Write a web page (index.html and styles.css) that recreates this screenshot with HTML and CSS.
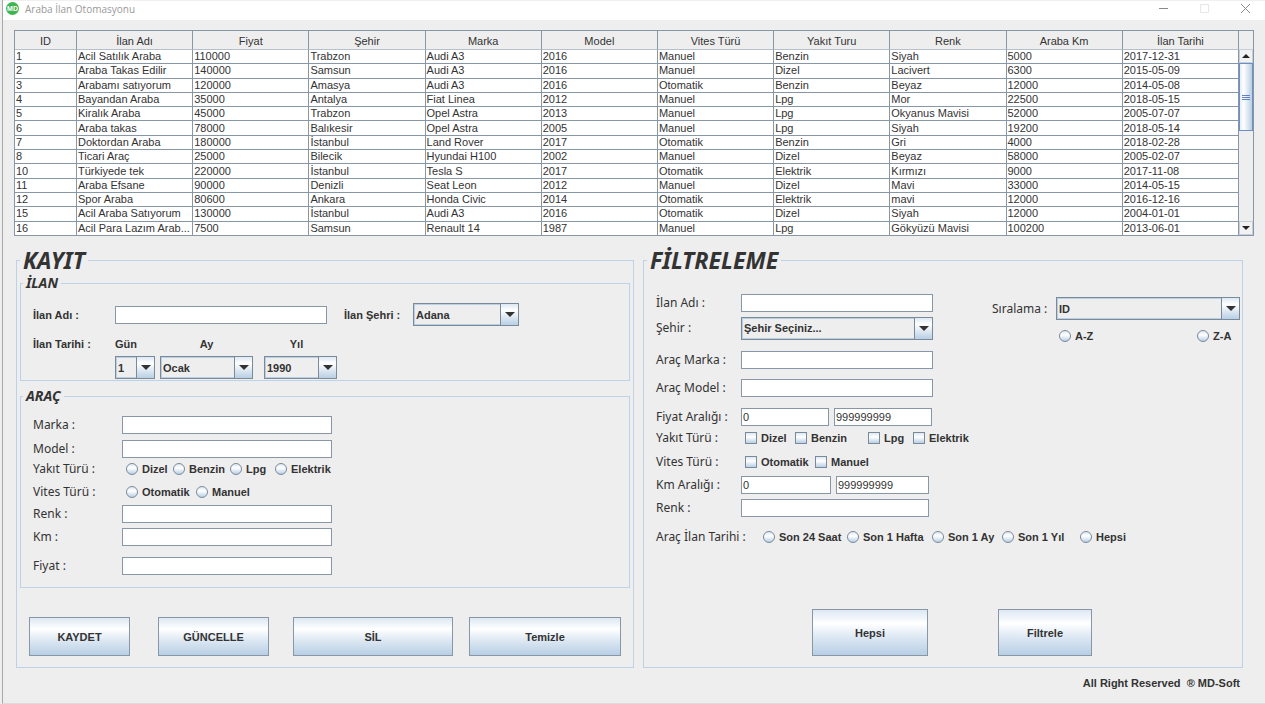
FILE: index.html
```html
<!DOCTYPE html>
<html lang="tr">
<head>
<meta charset="utf-8">
<title>Araba İlan Otomasyonu</title>
<link rel="stylesheet" href="styles.css">
</head>
<body>
<div class="window">
  <header class="titlebar">
    <span class="logo">MD</span>
    <h1 class="title">Araba İlan Otomasyonu</h1>
    <div class="controls">
      <button type="button" class="ctl" aria-label="Küçült"><svg width="11" height="11" viewBox="0 0 11 11"><path d="M1 5.5h9" stroke="#8a8a8a" fill="none"/></svg></button>
      <button type="button" class="ctl" aria-label="Büyüt" disabled><svg width="11" height="11" viewBox="0 0 11 11"><path d="M1.5 1.5h8v8h-8z" stroke="#e6e6e6" fill="none"/></svg></button>
      <button type="button" class="ctl" aria-label="Kapat"><svg width="11" height="11" viewBox="0 0 11 11"><path d="M1 1l9 9M10 1l-9 9" stroke="#8a8a8a" fill="none"/></svg></button>
    </div>
  </header>
  <main class="content">
    <div class="grid-box">
      <table class="cars">
        <thead><tr><th class="id">ID</th><th>İlan Adı</th><th>Fiyat</th><th>Şehir</th><th>Marka</th><th>Model</th><th>Vites Türü</th><th>Yakıt Turu</th><th>Renk</th><th>Araba Km</th><th>İlan Tarihi</th></tr></thead>
        <tbody>
          <tr><td>1</td><td>Acil Satılık Araba</td><td>110000</td><td>Trabzon</td><td>Audi A3</td><td>2016</td><td>Manuel</td><td>Benzin</td><td>Siyah</td><td>5000</td><td>2017-12-31</td></tr>
          <tr><td>2</td><td>Araba Takas Edilir</td><td>140000</td><td>Samsun</td><td>Audi A3</td><td>2016</td><td>Manuel</td><td>Dizel</td><td>Lacivert</td><td>6300</td><td>2015-05-09</td></tr>
          <tr><td>3</td><td>Arabamı satıyorum</td><td>120000</td><td>Amasya</td><td>Audi A3</td><td>2016</td><td>Otomatik</td><td>Benzin</td><td>Beyaz</td><td>12000</td><td>2014-05-08</td></tr>
          <tr><td>4</td><td>Bayandan Araba</td><td>35000</td><td>Antalya</td><td>Fiat Linea</td><td>2012</td><td>Manuel</td><td>Lpg</td><td>Mor</td><td>22500</td><td>2018-05-15</td></tr>
          <tr><td>5</td><td>Kiralık Araba</td><td>45000</td><td>Trabzon</td><td>Opel Astra</td><td>2013</td><td>Manuel</td><td>Lpg</td><td>Okyanus Mavisi</td><td>52000</td><td>2005-07-07</td></tr>
          <tr><td>6</td><td>Araba takas</td><td>78000</td><td>Balıkesir</td><td>Opel Astra</td><td>2005</td><td>Manuel</td><td>Lpg</td><td>Siyah</td><td>19200</td><td>2018-05-14</td></tr>
          <tr><td>7</td><td>Doktordan Araba</td><td>180000</td><td>İstanbul</td><td>Land Rover</td><td>2017</td><td>Otomatik</td><td>Benzin</td><td>Gri</td><td>4000</td><td>2018-02-28</td></tr>
          <tr><td>8</td><td>Ticari Araç</td><td>25000</td><td>Bilecik</td><td>Hyundai H100</td><td>2002</td><td>Manuel</td><td>Dizel</td><td>Beyaz</td><td>58000</td><td>2005-02-07</td></tr>
          <tr><td>10</td><td>Türkiyede tek</td><td>220000</td><td>İstanbul</td><td>Tesla S</td><td>2017</td><td>Otomatik</td><td>Elektrik</td><td>Kırmızı</td><td>9000</td><td>2017-11-08</td></tr>
          <tr><td>11</td><td>Araba Efsane</td><td>90000</td><td>Denizli</td><td>Seat Leon</td><td>2012</td><td>Manuel</td><td>Dizel</td><td>Mavi</td><td>33000</td><td>2014-05-15</td></tr>
          <tr><td>12</td><td>Spor Araba</td><td>80600</td><td>Ankara</td><td>Honda Civic</td><td>2014</td><td>Otomatik</td><td>Elektrik</td><td>mavi</td><td>12000</td><td>2016-12-16</td></tr>
          <tr><td>15</td><td>Acil Araba Satıyorum</td><td>130000</td><td>İstanbul</td><td>Audi A3</td><td>2016</td><td>Otomatik</td><td>Dizel</td><td>Siyah</td><td>12000</td><td>2004-01-01</td></tr>
          <tr><td>16</td><td>Acil Para Lazım Arab...</td><td>7500</td><td>Samsun</td><td>Renault 14</td><td>1987</td><td>Manuel</td><td>Lpg</td><td>Gökyüzü Mavisi</td><td>100200</td><td>2013-06-01</td></tr>
        </tbody>
      </table>
      <div class="scroll">
        <div class="corner"></div>
        <button type="button" class="arrow up" aria-label="Yukarı"></button>
        <div class="track"><div class="thumb"><i></i><i></i><i></i></div></div>
        <button type="button" class="arrow down" aria-label="Aşağı"></button>
      </div>
    </div>

    <div class="panels">
      <fieldset class="panel">
        <legend class="big">KAYIT</legend>
        <fieldset class="group">
          <legend>İLAN</legend>
          <div class="row">
            <label class="lead" for="ad">İlan Adı :</label>
            <input class="field w212" id="ad" type="text">
            <label class="city" for="sehir">İlan Şehri :</label>
            <span class="combo w106"><select id="sehir"><option>Adana</option></select></span>
          </div>
          <div class="date">
            <span>İlan Tarihi :</span>
            <label for="gun">Gün</label><label class="mid" for="ay">Ay</label><label class="mid" for="yil">Yıl</label>
            <span class="combo w40 day"><select id="gun"><option>1</option></select></span>
            <span class="combo w93"><select id="ay"><option>Ocak</option></select></span>
            <span class="combo w73"><select id="yil"><option>1990</option></select></span>
          </div>
        </fieldset>
        <fieldset class="group car">
          <legend>ARAÇ</legend>
          <div class="form car-form">
            <label for="marka">Marka :</label><div><input class="field w210" id="marka" type="text"></div>
            <label for="model">Model :</label><div><input class="field w210" id="model" type="text"></div>
            <span>Yakıt Türü :</span>
            <div class="opts fuel">
              <label><input type="radio" name="yakit">Dizel</label><label><input type="radio" name="yakit">Benzin</label><label><input type="radio" name="yakit">Lpg</label><label><input type="radio" name="yakit">Elektrik</label>
            </div>
            <span>Vites Türü :</span>
            <div class="opts gear">
              <label><input type="radio" name="vites">Otomatik</label><label><input type="radio" name="vites">Manuel</label>
            </div>
            <label for="renk">Renk :</label><div><input class="field w210" id="renk" type="text"></div>
            <label for="km">Km :</label><div><input class="field w210" id="km" type="text"></div>
            <label for="fiyat">Fiyat :</label><div><input class="field w210" id="fiyat" type="text"></div>
          </div>
        </fieldset>
        <div class="actions save">
          <button type="button" class="btn b1">KAYDET</button>
          <button type="button" class="btn b2">GÜNCELLE</button>
          <button type="button" class="btn b3">SİL</button>
          <button type="button" class="btn b4">Temizle</button>
        </div>
      </fieldset>

      <fieldset class="panel">
        <legend class="big">FİLTRELEME</legend>
        <div class="filter">
          <div class="form filter-form">
            <label for="f-ad">İlan Adı :</label><div><input class="field w192" id="f-ad" type="text"></div>
            <label for="f-sehir">Şehir :</label><div><span class="combo w192"><select id="f-sehir"><option>Şehir Seçiniz...</option></select></span></div>
            <label for="f-marka">Araç Marka :</label><div><input class="field w192" id="f-marka" type="text"></div>
            <label for="f-model">Araç Model :</label><div><input class="field w192" id="f-model" type="text"></div>
            <label for="f-fiyat">Fiyat Aralığı :</label>
            <div class="range"><input class="field" id="f-fiyat" type="text" value="0"><input class="field" type="text" value="999999999" aria-label="En yüksek fiyat"></div>
            <span>Yakıt Türü :</span>
            <div class="opts fuel">
              <label><input type="checkbox">Dizel</label><label><input type="checkbox">Benzin</label><label><input type="checkbox">Lpg</label><label><input type="checkbox">Elektrik</label>
            </div>
            <span>Vites Türü :</span>
            <div class="opts gear">
              <label><input type="checkbox">Otomatik</label><label><input type="checkbox">Manuel</label>
            </div>
            <label for="f-km">Km Aralığı :</label>
            <div class="range km"><input class="field" id="f-km" type="text" value="0"><input class="field" type="text" value="999999999" aria-label="En yüksek km"></div>
            <label for="f-renk">Renk :</label><div><input class="field w188" id="f-renk" type="text"></div>
          </div>
          <div class="sort">
            <label class="sort-label" for="sirala">Sıralama :</label>
            <span class="combo w184"><select id="sirala"><option>ID</option></select></span>
            <div class="opts order">
              <label><input type="radio" name="sira">A-Z</label><label><input type="radio" name="sira">Z-A</label>
            </div>
          </div>
        </div>
        <div class="age">
          <span>Araç İlan Tarihi :</span>
          <div class="opts ages">
            <label><input type="radio" name="tarih">Son 24 Saat</label><label><input type="radio" name="tarih">Son 1 Hafta</label><label><input type="radio" name="tarih">Son 1 Ay</label><label><input type="radio" name="tarih">Son 1 Yıl</label><label><input type="radio" name="tarih">Hepsi</label>
          </div>
        </div>
        <div class="actions find">
          <button type="button" class="btn">Hepsi</button>
          <button type="button" class="btn">Filtrele</button>
        </div>
      </fieldset>
    </div>
    <footer class="footer">All Right Reserved &nbsp;® MD-Soft</footer>
  </main>
</div>
</body>
</html>
```
FILE: styles.css
```css
* { box-sizing: border-box; }

body {
  margin: 0;
  background: #eee;
  color: #333;
  font: bold 11px/14px "Liberation Sans", Arial, sans-serif;
}

.window {
  min-height: 100vh;
  margin-left: 2px;
  border-left: 1px solid #a8a8a8;
  border-bottom: 1px solid #dcdcdc;
}

/* title bar */
.titlebar {
  display: flex;
  align-items: center;
  height: 20px;
  padding: 0 14px 4px 3px;
  border-top: 1px solid #f0f0f0;
  background: #fff;
}

.logo {
  width: 13px;
  height: 13px;
  border-radius: 50%;
  background: #3fb551;
  color: #fff;
  font-size: 7px;
  line-height: 13px;
  text-align: center;
}

.title {
  margin: 0 0 0 6px;
  color: #999;
  font: 10px/14px "Open Sans", sans-serif;
}

.controls {
  display: flex;
  gap: 30px;
  margin-left: auto;
}

.ctl {
  display: flex;
  padding: 0;
  border: 0;
  background: none;
}

.content { padding: 10px 11px 0; }

/* listing table */
.grid-box {
  display: flex;
  height: 206px;
  border: 1px solid #8797a7;
  background: #fff;
}

.cars {
  flex: 1;
  width: 100%;
  height: 100%;
  table-layout: fixed;
  border-collapse: separate;
  border-spacing: 0;
  font-weight: normal;
}

.cars th,
.cars td {
  padding: 0 1px;
  border-right: 1px solid #8797a7;
  border-bottom: 1px solid #8797a7;
  line-height: 13px;
  white-space: nowrap;
  overflow: hidden;
}

.cars th {
  height: 19px;
  padding-top: 2px;
  background: #eee;
  font-weight: normal;
  border-bottom-color: #b4c0cc;
}

.cars td { text-align: left; }
.cars .id { width: 62px; }
.cars tbody tr:last-child td { border-bottom: 0; }

.scroll {
  display: flex;
  flex: none;
  flex-direction: column;
  width: 14px;
  background: #eee;
}

.corner { height: 18px; }

.arrow {
  display: flex;
  align-items: center;
  justify-content: center;
  height: 14px;
  padding: 0;
  border: 1px solid #c5cfda;
  background: #f2f2f2;
}

.arrow::before {
  content: "";
  border: 4px solid transparent;
}

.up::before { border-top-width: 0; border-bottom-color: #222; }
.down::before { border-bottom-width: 0; border-top-color: #222; }

.track { flex: 1; }

.thumb {
  display: flex;
  flex-direction: column;
  align-items: center;
  justify-content: center;
  gap: 1px;
  height: 68px;
  border: 1px solid #6f8fc4;
  background: linear-gradient(to right, #e3edf6, #fff 30%, #b8cfe5);
}

.thumb i {
  width: 8px;
  height: 1px;
  background: #6382bf;
}

/* panels */
.panels {
  display: grid;
  grid-template-columns: 618fr 600fr;
  gap: 9px;
  margin: 11px 0 0 2px;
  padding-right: 11px;
}

fieldset {
  min-width: 0;
  margin: 0;
  padding: 0;
  border: 1px solid #bdd2e6;
}

legend {
  margin-left: -10px;
  padding: 0 3px;
  font: italic bold 14px/18px "Noto Sans", sans-serif;
}

legend.big {
  margin-left: 3px;
  font-size: 23px;
  line-height: 26px;
}

.panel {
  display: flex;
  flex-direction: column;
  padding-bottom: 11px;
}

.group { margin: 1px 3px 0; padding: 11px 12px 1px; }
.car { margin-top: 6px; padding: 10px 12px 11px; }

.field {
  height: 18px;
  padding: 0 1px;
  border: 1px solid #8797a7;
  border-radius: 0;
  background: #fff;
  color: #333;
  font: 11px/16px "Liberation Sans", Arial, sans-serif;
}

.combo {
  position: relative;
  display: inline-flex;
  height: 23px;
  border: 1px solid #7a8a99;
  background: #eee;
}

.combo select {
  flex: 1;
  min-width: 0;
  padding: 0 18px 0 1px;
  border: 1px solid #b8cfe5;
  appearance: none;
  background: none;
  color: #333;
  font: inherit;
}

.combo::before {
  content: "";
  position: absolute;
  inset: 0 0 0 auto;
  width: 17px;
  border-left: 1px solid #7a8a99;
  background: linear-gradient(#dde8f3, #fff 30%, #b8cfe5);
  pointer-events: none;
}

.combo::after {
  content: "";
  position: absolute;
  top: 8px;
  right: 3px;
  border: 5px solid transparent;
  border-top-color: #333;
  border-bottom-width: 0;
  pointer-events: none;
}

.w40 { width: 40px; }
.w73 { width: 73px; }
.w93 { width: 93px; }
.w106 { width: 106px; }
.w184 { width: 184px; }
.w188 { width: 188px; }
.w192 { width: 192px; }
.w210 { width: 210px; }
.w212 { width: 212px; }

.row { display: flex; align-items: center; }
.lead { width: 82px; }
.city { width: 86px; padding-left: 17px; }

.date {
  display: grid;
  grid-template-columns: 82px 45px 104px 73px;
  row-gap: 5px;
  margin-top: 11px;
}

.day { grid-column: 2; }
.mid { width: 93px; text-align: center; }
.mid + .mid { width: 65px; }

/* label / control forms */
.form {
  display: grid;
  grid-template-columns: 89px 1fr;
}

.form > * {
  display: flex;
  align-items: center;
  height: 20px;
}

.form > label,
.form > span,
.age > span,
.sort-label {
  font: 12px/20px "Noto Sans", sans-serif;
  white-space: nowrap;
}

.car-form { grid-template-rows: 24px 20px 23px 22px 23px 29px 20px; }

.filter-form {
  grid-template-columns: 85px 1fr;
  grid-template-rows: 25px 32px 28px 29px 21px 24px 23px 23px 20px;
}

.opts {
  display: grid;
  align-items: center;
}

.form .opts { display: grid; padding-left: 4px; }
.fuel { grid-template-columns: 47px 57px 45px auto; justify-content: start; }
.gear { grid-template-columns: 70px auto; justify-content: start; }
.filter-form .fuel { grid-template-columns: 50px 73px 45px auto; }

.opts label {
  display: flex;
  align-items: center;
  gap: 4px;
  white-space: nowrap;
}

.opts input {
  flex: none;
  width: 12px;
  height: 12px;
  margin: 0;
  appearance: none;
  border: 1px solid #7a8a99;
  background: linear-gradient(#dde8f3, #fff 40%, #b8cfe5);
}

.opts input[type="radio"] { border-radius: 50%; }

.form .range {
  display: grid;
  grid-template-columns: 88px 98px;
  gap: 5px;
}

.form .km { grid-template-columns: 90px 93px; }

.range .field { width: 100%; }

.filter {
  display: flex;
  justify-content: space-between;
  padding: 20px 2px 0 12px;
}

.sort {
  display: grid;
  grid-template-columns: 64px 184px;
  align-content: start;
  align-items: center;
  row-gap: 9px;
  padding-top: 4px;
}

.order {
  grid-column: 2;
  grid-template-columns: 138px auto;
  justify-content: start;
  padding-left: 3px;
}

.age {
  display: flex;
  align-items: center;
  margin-top: 9px;
  padding-left: 12px;
}

.age > span { width: 107px; }
.ages { grid-template-columns: 84px 85px 70px 78px auto; }

.actions {
  display: grid;
  margin-top: auto;
  padding-top: 29px;
}

.save {
  grid-template-columns: 101fr 28fr 111fr 24fr 160fr 16fr 152fr;
  padding-right: 12px;
  padding-left: 12px;
}

.b1 { grid-column: 1; }
.b2 { grid-column: 3; }
.b3 { grid-column: 5; }
.b4 { grid-column: 7; }

.find {
  grid-template-columns: 116px 94px;
  column-gap: 70px;
  padding-left: 168px;
}

.btn {
  height: 39px;
  padding: 0;
  border: 1px solid #8797a7;
  border-radius: 0;
  background: linear-gradient(#dde8f3, #fff 30%, #dde8f3 60%, #b8cfe5);
  color: #333;
  font: inherit;
}

.find .btn { height: 47px; }

.footer {
  padding: 8px 14px 12px;
  text-align: right;
}
```
